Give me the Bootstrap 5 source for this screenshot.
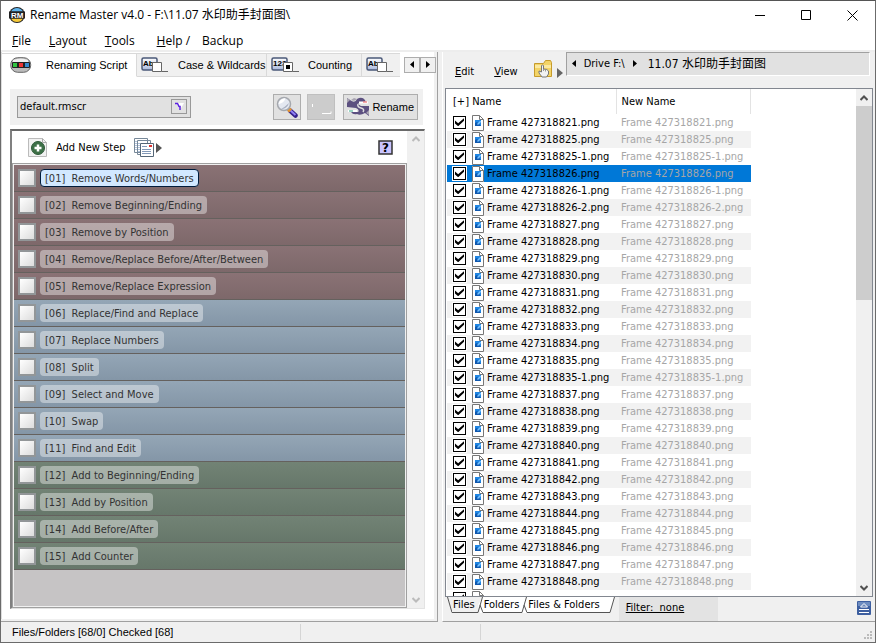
<!DOCTYPE html>
<html lang="en">
<head>
<meta charset="utf-8">
<meta name="viewport" content="width=device-width, initial-scale=1">
<title>Rename Master v4.0</title>
<link href="https://cdn.jsdelivr.net/npm/bootstrap@5.3.0/dist/css/bootstrap.min.css" rel="stylesheet">
<style>
:root{--ui:"DejaVu Sans Condensed","Noto Sans","Noto Sans CJK SC",sans-serif;--seg:"Open Sans","Noto Sans","Noto Sans CJK SC",sans-serif;--sans:"Liberation Sans",Arial,sans-serif}
body{font:11px/16px var(--ui);color:#000;background:#f0f0f0}
button,select,input{font:inherit;color:inherit}
.win{height:100vh;border:1px solid #6b6b6b;border-top-color:#555}
.titlebar{height:29px;font:12px/18px var(--seg);padding-left:8px}
.titlebar svg{display:block}
.app-title{padding-left:5px}
.cap{width:46px;height:28px;border:0;background:none;padding:0}
.menubar{height:23px;font:12px/18px var(--seg);border-bottom:2px solid #ededed;padding:2px 0 0 11px;gap:18px}
.menubar button,.flat{border:0;background:none;padding:0}
.help-group{gap:12px}
.left-pane{flex:0 0 50%;background:#fff;border-right:1px solid #a0a0a0;border-bottom:1px solid #a0a0a0;box-shadow:inset -3px -2px 0 #f0f0f0,inset 1px 0 0 #ddd}
.tabstrip{height:26px;padding:1px 0 0 1px;border:0}
.tabx{height:24px;padding:0 3px 0 4px;border:0;background:#f0f0f0;border-right:1px solid #d9d9d9;border-top:1px solid #d9d9d9;border-bottom:1px solid #d9d9d9;font:11px/16px var(--sans);white-space:nowrap;gap:9px;flex:none}
.tabx.active{background:#fff;border-bottom-color:#fff;width:135px;gap:14px}
.tab-b{width:130px}
.tab-c{width:95px}
.tab-d{width:38px}
.spins{padding:4px 1px 0 0}
.spin{width:16px;height:16px;padding:0;border:1px solid #adadad;background:#f0f0f0;line-height:0}
.toolstrip{background:#f0f0f0;height:36px;margin:11px 14px 0 9px;padding:0 5px 0 7px}
.combo{width:174px;height:22px;border:1px solid #999;background:#e1e1e1;padding-right:3px}
.combo select{appearance:none;border:0;background:none;padding:0 2px;outline:0}
.combo span{width:16px;height:15px;border:1px solid #999;line-height:0}
.tbtn{height:26px;border:1px solid #adadad;background:#e1e1e1;padding:0 3px;font:11px/16px var(--sans)}
.tbtn.sq{width:28px;padding:0}
.tbtn.gap6{margin-left:6px}
.tbtn.go{gap:3px}
.tbtn:disabled{background:#ccc;border-color:#bfbfbf}
.script{margin:4px 12px 12px 9px;border-top:2px solid #696969;border-left:2px solid #808080;border-right:1px solid #e3e3e3;border-bottom:1px solid #e3e3e3}
.script-head{height:32px;padding:2px 14px 0 16px}
.steps{background:#c6c4c5;border:1px solid #a0a0a0;padding:1px;box-shadow:inset 0 0 0 1px #f0f0f0}
.step{height:27px;padding:0 0 0 4px;border-bottom:1px solid #65615e;color:#333}
.step.m{background:linear-gradient(#8a7275,#7d686a)}
.step.b{background:linear-gradient(#94a6b6,#8496a7)}
.step.g{background:linear-gradient(#728375,#66776a)}
.step input{appearance:none;width:18px;height:18px;margin:0;border:2px solid #929698;background:linear-gradient(135deg,#fff,#dcdcdc)}
.pill{height:18px;line-height:19px;border-radius:4px;padding:0 5px;background:rgba(255,255,255,.4);white-space:pre}
.pill.on{background:#d2e8ff;border:1px solid #001c3c;padding:0 4px;line-height:17px}
.vbar{width:17px;background:#f0f0f0;padding:4px 0}
.right-pane{margin-left:4px;border-left:1px solid #fff;border-bottom:1px solid #a0a0a0}
.addr-row{height:37px;padding-left:12px}
.addr{height:24px;background:#e1e1e1;border:1px solid #a0a0a0;border-right-color:#fff;border-bottom-color:#fff;margin:0 5px 0 3px;padding-left:5px}
.addr .cjk{font-size:12px;margin-left:11px}
.filebox{margin:0 2px;border:1px solid #828790;background:#fff}
.files{border-collapse:collapse;table-layout:fixed;width:304px;margin-left:1px}
.files th{height:25px;padding:1px 0 0 6px;font-weight:400;border-right:1px solid #e3e3e3}
.files th+th,.files td:nth-child(2){padding-left:5px}
.files td{height:17px;line-height:17px;padding:0;white-space:nowrap}
.files tr:nth-child(even) td{background:#f2f2f2}
.files tr.sel td{background:#0078d7}
.files td:nth-child(2){color:#a6a6a6}
.fcell{height:17px;padding-left:5px}
.fcell input{appearance:none;width:15px;height:15px;margin:0;border:1px solid #fff;background:#fff;box-shadow:inset 0 0 0 1px #000;flex:none}
.fcell input:checked::before{content:"";display:block;width:9px;height:8px;margin:2px;background:#000;clip-path:polygon(0 30%,35% 62%,100% 0,100% 32%,35% 100%,0 66%)}
.fcell svg{margin:0 3px 0 5px;flex:none;background:#fff}
.sbar{width:16px;background:#f0f0f0}
.thumb{height:194px;background:#cdcdcd}
.foot{height:25px;padding-left:4px}
.sheet{height:16px;border:0;border-bottom:1px solid #555;background:#fff;padding:0 1px;line-height:15px}
.sheet.cur{background:#f0f0f0}
.filter{width:99px;height:24px;background:#e3e3e3;margin-left:4px;padding:3px 7px}
.filter a{color:#000}
.statusbar{height:20px;font:11px/16px var(--sans);padding-left:11px}
.cellx{width:289px;border-right:1px solid #d5d5d5}
.cellx+.cellx{width:180px}
</style>
<script src="https://cdn.jsdelivr.net/npm/bootstrap@5.3.0/dist/js/bootstrap.bundle.min.js"></script>
</head>
<body>
<svg width="0" height="0" class="position-absolute" aria-hidden="true">
 <linearGradient id="chip" x2="0" y2="1"><stop stop-color="#fff"/><stop offset="1" stop-color="#a9b8dc"/></linearGradient>
 <symbol id="png" viewBox="0 0 12 16"><path d="M.5.5h7l4 4v11H.5z" fill="#fff" stroke="#777"/><path d="M7.500.5v4h4" fill="none" stroke="#777"/><path d="M3 5h6v6H3z" fill="#1f86e4"/><path d="M3 11V8l2-1 4 4z" fill="#0f58ae"/><path d="M5 9l3-3h1v1l-3 3z" fill="#7cc4ff"/></symbol>
 <symbol id="tri" viewBox="0 0 6 10"><path d="M0 0l6 5-6 5z"/></symbol>
</svg>
<div class="win d-flex flex-column overflow-hidden">
 <header class="titlebar bg-white d-flex align-items-center">
  <svg width="16" height="16" viewBox="0 0 16 16"><circle cx="8" cy="8" r="8" fill="#222"/><path d="M2 4.500a6.800 6.800 0 0 1 12 0z" fill="#5fb4ec"/><path d="M2 11.500a6.800 6.800 0 0 0 12 0z" fill="#f5c93a"/><path d="M0 4.500h16v7H0z" fill="#222"/><text x="2" y="11" font-family="Liberation Sans" font-weight="bold" font-size="8" fill="#fff">RM</text></svg>
  <span class="app-title text-nowrap">Rename Master v4.0 - F:\11.07 水印助手封面图\</span>
  <div class="ms-auto d-flex">
   <button class="cap" aria-label="Minimize"><svg class="mx-auto" width="11" height="11"><path d="M0 5.500h10" stroke="#000"/></svg></button>
   <button class="cap" aria-label="Maximize"><svg class="mx-auto" width="11" height="11"><path d="M.5.5h9v9h-9z" fill="none" stroke="#000"/></svg></button>
   <button class="cap" aria-label="Close"><svg class="mx-auto" width="11" height="11"><path d="M.5.5l10 10M10.500.5l-10 10" stroke="#000"/></svg></button>
  </div>
 </header>
 <nav class="menubar bg-white d-flex align-items-center">
  <button><u>F</u>ile</button><button><u>L</u>ayout</button><button><u>T</u>ools</button><div class="help-group d-flex ms-1"><button><u>H</u>elp /</button><button>Backup</button></div>
 </nav>
 <main class="d-flex flex-grow-1 overflow-hidden">
  <section class="left-pane d-flex flex-column">
   <div class="tabstrip d-flex">
    <button class="tabx active d-flex align-items-center"><svg width="22" height="16" viewBox="0 0 22 16" class="ms-1 flex-shrink-0"><rect x=".7" y=".7" width="20" height="14.600" rx="7" fill="#bbb" stroke="#666"/><path d="M3 3q8-3 15 0v2H3z" fill="#eee"/><rect x="2" y="5" width="18" height="6" rx="1" fill="#222"/><path d="M3 6h4v4H3z" fill="#31c440"/><path d="M9 6h4v4H9z" fill="#e33"/><path d="M15 6h4v4h-4z" fill="#38c"/></svg>Renaming Script</button>
    <button class="tabx tab-b d-flex align-items-center"><svg width="28" height="16" class="flex-shrink-0"><rect x="1" y="1" width="15" height="12" rx="1.500" fill="url(#chip)" stroke="#4a5878" stroke-width="1.500"/><text x="2" y="9" font-family="Liberation Sans" font-weight="bold" font-size="8">Ab</text><path d="M11.500 5.500h9v9h-9z" fill="#fff" stroke="#666"/><path d="M20.500 14.500H27" stroke="#666"/></svg>Case &amp; Wildcards</button>
    <button class="tabx tab-c d-flex align-items-center"><svg width="28" height="16" class="flex-shrink-0"><rect x="1" y="1" width="15" height="12" rx="1.500" fill="url(#chip)" stroke="#4a5878" stroke-width="1.500"/><text x="2" y="9" font-family="Liberation Sans" font-weight="bold" font-size="8">123</text><path d="M12.500 5.500h9v9h-9z" fill="#fff" stroke="#666"/><path d="M15 8h4v4h-4z"/><path d="M21.500 14.500H28" stroke="#666"/></svg>Counting</button>
    <button class="tabx tab-d d-flex align-items-center border-end-0" aria-label="More"><svg width="28" height="16" class="flex-shrink-0"><rect x="1" y="1" width="15" height="12" rx="1.500" fill="url(#chip)" stroke="#4a5878" stroke-width="1.500"/><text x="2" y="9" font-family="Liberation Sans" font-weight="bold" font-size="8">Ab</text><path d="M11.500 5.500h9v9h-9z" fill="#fff" stroke="#666"/><path d="M20.500 14.500H27" stroke="#666"/></svg></button>
    <div class="spins d-flex ms-auto"><button class="spin" aria-label="Previous tabs"><svg width="4" height="7"><path d="M4 0v7L0 3.500z"/></svg></button><button class="spin" aria-label="Next tabs"><svg width="4" height="7"><path d="M0 0v7l4-3.500z"/></svg></button></div>
   </div>
   <div class="toolstrip d-flex align-items-center">
    <label class="combo d-flex align-items-center"><select class="flex-grow-1" aria-label="Script file"><option>default.rmscr</option></select><span><svg width="14" height="13"><path d="M4 3h8l-4 7z" fill="#fff"/><path d="M3 3.500h2.500l1.500 3h1v3.500" fill="none" stroke="#5a1fe0" stroke-width="1.500"/></svg></span></label>
    <button class="tbtn sq ms-auto" aria-label="Preview"><svg width="22" height="22" viewBox="0 0 22 22"><path d="M14 14.500l5.500 5" stroke="#33208a" stroke-width="4.500" stroke-linecap="round"/><path d="M14.500 14.500l5 4.500" stroke="#8f80f5" stroke-width="2"/><path d="M12.500 13l2 2" stroke="#e8962e" stroke-width="4"/><circle cx="8" cy="8" r="6.500" fill="#e4e8f1" stroke="#a5a8ae" stroke-width="1.500"/><path d="M2.500 8q1-5 7-6-1 5-7 6z" fill="#fff"/><path d="M5 13q6 0 8-6-4 4-8 6" fill="#a9b0c2"/></svg></button>
    <button class="tbtn sq gap6" disabled aria-label="Undo"><svg width="22" height="20"><path d="M2.500 7v3M12 16.500h9v-2" stroke="#fff" fill="none"/></svg></button>
    <button class="tbtn go ms-2 d-flex align-items-center"><svg width="22" height="20" viewBox="0 0 22 20"><path d="M3 3q5 4 7-1 5-3 8 1l1 3h-7q-2 1 2 3l8 0v10l-4-3q-5 3-8 1-4 1-6-2h7q2-2-2-4l-9-1V1z" fill="#5c5080"/><path d="M0 1l3 2-3 3zM22 18l-3-2 3-3zM4 3q4 2 6-1L7 1z" fill="#a9a5b2"/><path d="M12 5.500h9M1 14h9" stroke="#fff" stroke-width="2"/><path d="M16 5h4" stroke="#e55"/><path d="M2 14h4" stroke="#3a8"/><path d="M11 7q-1 3 3 4t2 4" stroke="#ddd" fill="none" stroke-width="1.500"/></svg>Rename</button>
   </div>
   <div class="script flex-grow-1 d-flex overflow-hidden">
    <div class="flex-grow-1 d-flex flex-column overflow-hidden">
     <div class="script-head d-flex align-items-center">
      <svg width="20" height="19" viewBox="0 0 20 19"><path d="M.5.5h14l4 4v14H.5z" fill="#f2f2f2" stroke="#bbb"/><path d="M14.500.5v4h4" fill="none" stroke="#aaa"/><circle cx="10" cy="10" r="6.500" fill="#3d7047" stroke="#2e5a39"/><path d="M10 6.500v7M6.500 10h7" stroke="#fff" stroke-width="2.500"/></svg>
      <button class="flat mx-2">Add New Step</button>
      <svg width="22" height="19" viewBox="0 0 22 19"><path d="M.5.500h13v14H.5zM3.500 2.500h13v14h-13z" fill="#fff" stroke="#789"/><path d="M6.500 5.500h13v13h-13z" fill="#fff" stroke="#567"/><path d="M2 3v10M5 5v10" stroke="#68b" stroke-dasharray="1 1"/><path d="M8 8.500h5M8 11.500h9M8 13.500h9M8 15.500h9" stroke="#8299b8"/><path d="M15 7h3v2h-3z" fill="#d33"/></svg>
      <svg width="6" height="10" fill="#555"><use href="#tri"/></svg>
      <button class="flat ms-auto" aria-label="Help"><svg class="d-block" width="15" height="15"><path d="M1 1h13v13H1z" fill="#c9c4ff" stroke="#333" stroke-width="1.500"/><text x="4" y="12" font-family="DejaVu Sans" font-weight="bold" font-size="12">?</text></svg></button>
     </div>
     <div class="steps flex-grow-1" id="steps"></div>
    </div>
    <div class="vbar d-flex flex-column align-items-center justify-content-between"><svg width="8" height="9"><path d="M.5 6L4 2.500 7.500 6" fill="none" stroke="#bbb" stroke-width="2"/></svg><svg width="8" height="7"><path d="M.5 1L4 4.500 7.500 1" fill="none" stroke="#bbb" stroke-width="2"/></svg></div>
   </div>
  </section>
  <section class="right-pane flex-grow-1 d-flex flex-column overflow-hidden">
   <div class="addr-row d-flex align-items-start">
    <button class="flat mt-2 pt-1 me-3"><u>E</u>dit</button><button class="flat mt-2 pt-1 me-3 ms-1"><u>V</u>iew</button>
    <svg width="19" height="18" viewBox="0 0 19 18" class="mt-2 flex-shrink-0"><path d="M.5 3.500h9l2-3h5l1 2v14H.5z" fill="#f3d467" stroke="#c69b2c"/><path d="M1 5h16v3H1z" fill="#fbe9a0"/><path d="M7.500 5.500q1-1 2 0V9q4 0 5 2v3l-2 3H8l-3-4v-2l2.500 1z" fill="#f2f2f2" stroke="#777"/><path d="M9.500 9v2M11.500 9.500v2" stroke="#999"/></svg>
    <svg width="6" height="10" fill="#666" class="mt-3 ms-1 flex-shrink-0"><use href="#tri"/></svg>
    <div class="addr flex-grow-1 d-flex align-items-center text-nowrap"><svg width="4" height="7"><path d="M4 0v7L0 3.500z"/></svg><span class="ms-2">Drive F:\</span><svg width="4" height="7" class="ms-2"><path d="M0 0v7l4-3.500z"/></svg><span class="cjk">11.07 水印助手封面图</span></div>
   </div>
   <div class="filebox flex-grow-1 d-flex overflow-hidden">
    <div class="flex-grow-1 overflow-hidden"><table class="files"><colgroup><col style="width:169px"><col></colgroup><thead><tr><th>[+] Name</th><th>New Name</th></tr></thead><tbody id="files"></tbody></table></div>
    <div class="sbar d-flex flex-column align-items-center"><svg width="8" height="17" class="flex-shrink-0"><path d="M.5 11L4 7.500 7.500 11" fill="none" stroke="#505050" stroke-width="2"/></svg><div class="thumb w-100"></div><svg width="8" height="17" class="mt-auto flex-shrink-0"><path d="M.5 7L4 10.500 7.500 7" fill="none" stroke="#505050" stroke-width="2"/></svg></div>
   </div>
   <div class="foot d-flex align-items-start">
    <svg width="5" height="16"><path d="M0 0h5v15.500z" fill="#f0f0f0"/><path d="M.5 0L5 15.500" stroke="#555"/></svg><button class="sheet cur">Files</button>
    <svg width="7" height="16"><path d="M7 0v16H4L2 8z" fill="#fff"/><path d="M0 15.500h2L6.500 0M4 8l3 7.500" fill="none" stroke="#555"/></svg><button class="sheet">Folders</button>
    <svg width="7" height="16"><path d="M0 0h7v16H0z" fill="#fff"/><path d="M0 15.500h2L6.500 0M4 8l3 7.500" fill="none" stroke="#555"/></svg><button class="sheet pe-2">Files &amp; Folders</button>
    <svg width="7" height="16"><path d="M0 0h6.500L2 15.500H0z" fill="#fff"/><path d="M0 15.500h2L6.500 0" fill="none" stroke="#555"/></svg>
    <div class="filter text-nowrap"><a href="#">Filter:&nbsp; none</a></div>
    <button class="flat ms-auto me-1 pt-1" aria-label="Expand"><svg class="d-block" width="14" height="14"><rect width="14" height="14" rx="1" fill="#3d5fa0"/><path d="M1 1h12v4H1z" fill="#6d8cc0"/><path d="M3.500 6L7 2.500 10.500 6z" fill="none" stroke="#fff"/><path d="M2 8.500h10M2 11.500h10" stroke="#fff"/></svg></button>
   </div>
  </section>
 </main>
 <footer class="statusbar d-flex align-items-center">
  <span class="cellx">Files/Folders [68/0] Checked [68]</span><span class="cellx">&nbsp;</span>
  <svg class="ms-auto align-self-end" width="12" height="12" fill="#bbb"><path d="M7 1h2v2H7zM4 4h2v2H4zM7 4h2v2H7zM1 7h2v2H1zM4 7h2v2H4zM7 7h2v2H7z"/></svg>
 </footer>
</div>
<script>
const steps=["Remove Words/Numbers","Remove Beginning/Ending","Remove by Position","Remove/Replace Before/After/Between","Remove/Replace Expression","Replace/Find and Replace","Replace Numbers","Split","Select and Move","Swap","Find and Edit","Add to Beginning/Ending","Add by Position","Add Before/After","Add Counter"];
document.getElementById("steps").innerHTML=steps.map((s,i)=>`<div class="step ${i<5?"m":i<11?"b":"g"} d-flex align-items-center"><input type="checkbox" id="s${i}"><label for="s${i}" class="pill ms-1 ${i?"":"on"}">[${String(i+1).padStart(2,"0")}]  ${s}</label></div>`).join("");
const files="21 25 25-1 26 26-1 26-2 27 28 29 30 31 32 33 34 35 35-1 37 38 39 40 41 42 43 44 45 46 47 48".split(" ").map(n=>`Frame 4273188${n}.png`).concat("");
document.getElementById("files").innerHTML=files.map((n,i)=>`<tr class="${i==3?"sel":""}"><td><div class="fcell d-flex align-items-center"><input type="checkbox" checked id="f${i}" aria-label="Include ${n}"><svg width="12" height="16"><use href="#png"/></svg><label for="f${i}">${n}</label></div></td><td>${n}</td></tr>`).join("");
</script>
</body>
</html>
